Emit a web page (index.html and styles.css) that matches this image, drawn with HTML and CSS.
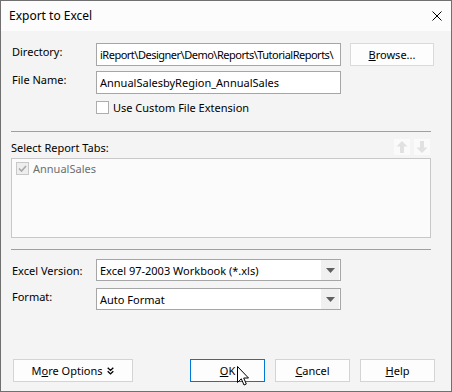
FILE: index.html
```html
<!DOCTYPE html>
<html>
<head>
<meta charset="utf-8">
<title>Export to Excel</title>
<link rel="stylesheet" href="styles.css">
</head>
<body>
<div class="window">
  <div class="titlebar">
    <span class="title">Export to Excel</span>
    <svg class="close" width="10" height="10" viewBox="0 0 10 10"><path d="M0.5 0.5L9.5 9.5M9.5 0.5L0.5 9.5" stroke="#000" stroke-width="1" fill="none"/></svg>
  </div>
  <div class="content">
    <div class="row row-dir">
      <div class="label">Directory:</div>
      <div class="field field-dir">iReport\Designer\Demo\Reports\TutorialReports\</div>
      <div class="btn browse"><u>B</u>rowse...</div>
    </div>
    <div class="row row-file">
      <div class="label">File Name:</div>
      <div class="field">AnnualSalesbyRegion_AnnualSales</div>
    </div>
    <div class="check-row">
      <span class="checkbox"></span>
      <span class="check-text">Use Custom File Extension</span>
    </div>
    <div class="sep sep1"></div>
    <div class="tabs-head">
      <span class="tabs-label">Select Report Tabs:</span>
      <div class="arrows">
        <span class="arrow-btn"><svg width="16" height="16" viewBox="0 0 16 16"><path d="M8 2L13.5 7.5H10V14H6V7.5H2.5Z" fill="#e1e1e1"/></svg></span>
        <span class="arrow-btn"><svg width="16" height="16" viewBox="0 0 16 16"><path d="M8 14L13.5 8.5H10V2H6V8.5H2.5Z" fill="#e1e1e1"/></svg></span>
      </div>
    </div>
    <div class="listbox">
      <div class="list-item">
        <span class="checkbox disabled"><svg width="11" height="11" viewBox="0 0 11 11"><path d="M2 5.5L4.5 8L9 3" stroke="#a9a9a9" stroke-width="1.6" fill="none"/></svg></span>
        <span class="item-text">AnnualSales</span>
      </div>
    </div>
    <div class="sep sep2"></div>
    <div class="row row-ver">
      <div class="label lbl-ver">Excel Version:</div>
      <div class="combo">
        <span class="combo-text">Excel 97-2003 Workbook (*.xls)</span>
        <span class="combo-arrow"><svg width="9" height="5" viewBox="0 0 9 5"><path d="M0 0H9L4.5 5Z" fill="#606060"/></svg></span>
      </div>
    </div>
    <div class="row row-fmt">
      <div class="label">Format:</div>
      <div class="combo">
        <span class="combo-text">Auto Format</span>
        <span class="combo-arrow"><svg width="9" height="5" viewBox="0 0 9 5"><path d="M0 0H9L4.5 5Z" fill="#606060"/></svg></span>
      </div>
    </div>
    <div class="buttons">
      <div class="btn more">M<u>o</u>re Options <svg class="chev" width="7" height="8" viewBox="0 0 7 8"><path d="M0.7 0.8L3.5 3.4L6.3 0.8M0.7 4.3L3.5 6.9L6.3 4.3" stroke="#000" stroke-width="1.4" fill="none"/></svg></div>
      <div class="btn-group">
        <div class="btn dlg ok"><u>O</u>K</div>
        <div class="btn dlg"><u>C</u>ancel</div>
        <div class="btn dlg"><u>H</u>elp</div>
      </div>
    </div>
  </div>
  <svg class="cursor" width="13" height="20" viewBox="0 0 13 20"><path d="M0.5 0.5V16.5L4.3 12.8L7 19L9.3 18L6.7 12H11.5Z" fill="#fff" stroke="#000" stroke-width="1" stroke-linejoin="round"/></svg>
</div>
</body>
</html>
```

FILE: styles.css
```css
html, body {
  margin: 0;
  padding: 0;
  background: #f3f4f3;
}
body {
  font-family: "Noto Sans", "DejaVu Sans", sans-serif;
  font-size: 11px;
  line-height: 15px;
  color: #000;
}
.window {
  position: relative;
  width: 452px;
  height: 392px;
  box-sizing: border-box;
  border: 1px solid #707070;
  background: #f3f4f3;
  display: flex;
  flex-direction: column;
  overflow: hidden;
}
.titlebar {
  height: 30px;
  flex: none;
  background: #fbfcfb;
  display: flex;
  align-items: center;
  justify-content: space-between;
  padding: 0 9px 0 8px;
}
.title {
  font-size: 12px;
  line-height: 16px;
}
.close {
  display: block;
}
.content {
  flex: 1;
  display: flex;
  flex-direction: column;
  padding-left: 10px;
}
.row {
  display: flex;
  align-items: flex-start;
  height: 23px;
}
.row-dir { margin-top: 12px; }
.row-file { margin-top: 5px; }
.label {
  width: 84px;
  padding-left: 1px;
  padding-top: 1px;
  flex: none;
}
.field {
  width: 245px;
  height: 23px;
  box-sizing: border-box;
  border: 1px solid #a6a6a6;
  background: #fff;
  padding: 3px 0 0 3px;
  white-space: nowrap;
  overflow: hidden;
}
.field-dir {
  letter-spacing: -0.5px;
}
.btn {
  box-sizing: border-box;
  height: 23px;
  background: #fdfdfd;
  border: 1px solid #d4d4d4;
  display: flex;
  align-items: center;
  justify-content: center;
}
.browse {
  width: 84px;
  margin-left: 9px;
  border-color: #dadada;
}
.check-row {
  display: flex;
  align-items: center;
  height: 13px;
  margin-top: 7px;
  padding-left: 85px;
}
.checkbox {
  width: 13px;
  height: 13px;
  box-sizing: border-box;
  border: 1px solid #adadad;
  background: #fff;
  flex: none;
  display: flex;
  align-items: center;
  justify-content: center;
}
.checkbox.disabled {
  border-color: #c8c8c8;
  background: #eeeeee;
}
.check-text {
  margin-left: 4px;
}
.sep {
  width: 420px;
  height: 1px;
  background: #a0a0a0;
  flex: none;
}
.sep1 { margin-top: 17px; }
.sep2 { margin-top: 11px; }
.tabs-head {
  margin-top: 7px;
  width: 420px;
  height: 16px;
  display: flex;
  align-items: center;
  justify-content: space-between;
}
.arrows {
  display: flex;
  gap: 4px;
  margin-right: 1px;
}
.arrow-btn {
  width: 16px;
  height: 16px;
  background: #fafafa;
  display: block;
}
.arrow-btn svg { display: block; }
.listbox {
  margin-top: 3px;
  width: 420px;
  height: 80px;
  box-sizing: border-box;
  border: 1px solid #c8c8c8;
  background: #fafbfa;
  padding: 2px 0 0 4px;
}
.list-item {
  display: flex;
  align-items: center;
  height: 15px;
}
.item-text {
  margin-left: 4px;
  color: #6e6e72;
}
.row-ver { margin-top: 9px; height: 22px; }
.row-fmt { margin-top: 7px; height: 22px; }
.lbl-ver { padding-top: 4px; }
.row-fmt .label { padding-top: 1px; }
.combo {
  width: 245px;
  height: 22px;
  box-sizing: border-box;
  border: 1px solid #a6a6a6;
  background: #fff;
  display: flex;
  align-items: center;
  justify-content: space-between;
}
.combo-text {
  padding-left: 3px;
  padding-top: 1px;
}
.combo-arrow {
  width: 18px;
  height: 20px;
  margin-right: 1px;
  background: #f0f0f0;
  display: flex;
  align-items: center;
  justify-content: center;
}
.combo-arrow svg { display: block; }
.buttons {
  margin-top: 49px;
  width: 424px;
  display: flex;
  justify-content: space-between;
}
.more {
  width: 120px;
  margin-left: 2px;
}
.chev {
  margin-left: 5px;
}
.btn-group {
  display: flex;
  gap: 10px;
}
.dlg {
  width: 75px;
}
.ok {
  border-color: #0078d7;
}
.cursor {
  position: absolute;
  left: 236px;
  top: 365px;
}
```
